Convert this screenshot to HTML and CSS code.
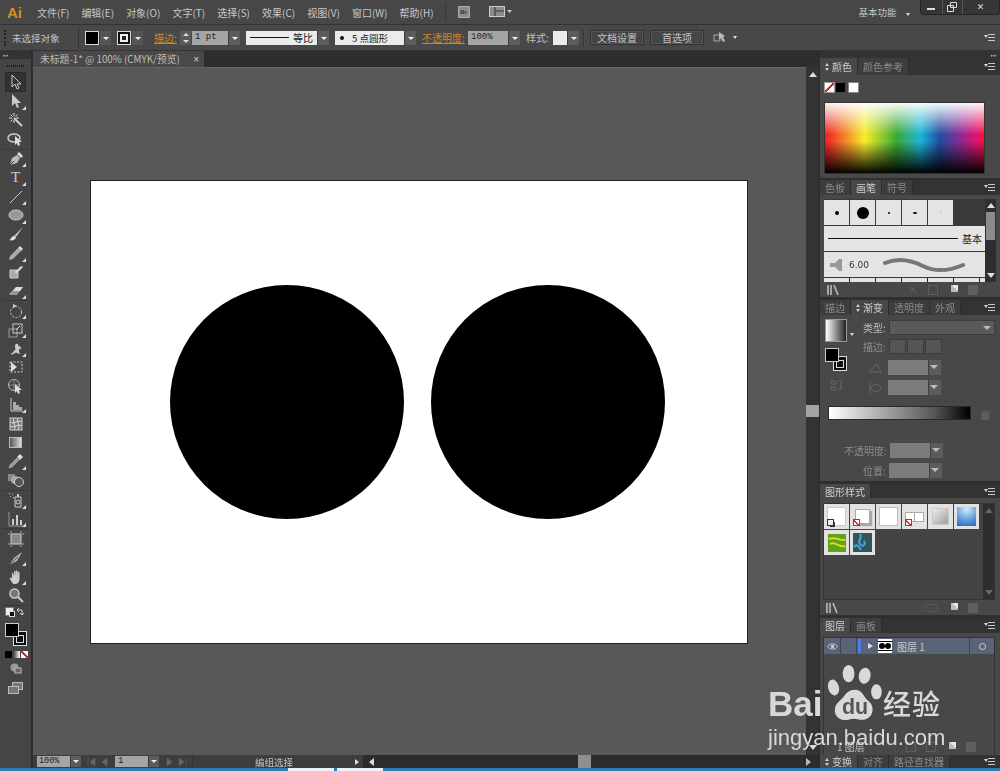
FILE: index.html
```html
<!DOCTYPE html>
<html lang="zh-CN">
<head>
<meta charset="utf-8">
<title>Adobe Illustrator</title>
<link rel="stylesheet" href="styles.css">
</head>
<body>
<div class="app">
  <header class="menubar">
    <span class="logo">Ai</span>
    <nav class="menus">
      <span>文件(F)</span><span>编辑(E)</span><span>对象(O)</span><span>文字(T)</span><span>选择(S)</span><span>效果(C)</span><span>视图(V)</span><span>窗口(W)</span><span>帮助(H)</span>
    </nav>
    <i class="vsep sep-menu"></i>
    <span class="br">Br</span>
    <svg class="arrange" width="24" height="12" viewBox="0 0 24 12"><rect x="0.5" y="0.5" width="15" height="10" fill="#8a8a8a" stroke="#ccc"/><path d="M6 1v9M6 5h9" stroke="#333"/><path d="M18 4h5l-2.500 3z" fill="#ccc"/></svg>
    <span class="workspace">基本功能</span>
    <i class="tiny-arrow"></i>
    <div class="winbtns">
      <span class="wb wb-min"><i></i></span>
      <span class="wb wb-max"><svg width="10" height="10" viewBox="0 0 10 10"><path d="M3.500 .5h6v5h-6zM.5 3.500h6v6h-6z" fill="#333" stroke="#ddd"/></svg></span>
      <span class="wb wb-close">✕</span>
    </div>
  </header>

  <section class="ctrlbar">
    <i class="grip"></i>
    <span class="noselect">未选择对象</span>
    <i class="vsep sep-a"></i>
    <span class="swatch sw-fill"></span><span class="drop d-dark"></span>
    <span class="swatch sw-stroke"><i></i></span><span class="drop d-dark"></span>
    <span class="orange l-stroke">描边:</span>
    <span class="spin"><i class="up"></i><i class="down"></i></span>
    <span class="field f-pt">1 pt</span><span class="drop"></span>
    <span class="lightbox lb-line"><i class="line"></i>等比</span><span class="drop"></span>
    <span class="lightbox lb-dot"><i class="bullet"></i>5 点圆形</span><span class="drop"></span>
    <span class="orange l-opac">不透明度:</span>
    <span class="field f-op">100%</span><span class="drop"></span>
    <span class="label l-style">样式:</span>
    <span class="lightbox lb-style"></span><span class="drop"></span>
    <i class="vsep sep-b"></i>
    <span class="btn b-doc">文档设置</span>
    <span class="btn b-pref">首选项</span>
    <svg class="align" width="14" height="13" viewBox="0 0 14 13"><path d="M1 4h6v6H1z" fill="none" stroke="#aaa"/><path d="M6 1l6 4-2 1 2 4-2 1-2-4-2 2z" fill="#bbb"/></svg>
    <i class="tiny-arrow ta-ctrl"></i>
    <span class="pmenu pm-ctrl"></span>
  </section>

  <div class="workarea">
    <aside class="toolbar">
      <div class="tb-head">▸▸</div>
      <div class="tb-grip"></div>
      <div class="tool selected"><svg width="16" height="16" viewBox="0 0 16 16"><path d="M4 1v12l3-3 2 5 2-1-2-4h4z" fill="#333" stroke="#ccc"/></svg></div>
      <div class="tool more"><svg width="16" height="16" viewBox="0 0 16 16"><path d="M4 1v12l3-3 2 5 2-1-2-4h4z" fill="#ccc"/></svg></div>
      <div class="tool"><svg width="16" height="16" viewBox="0 0 16 16"><path d="M6 6l8 8" stroke="#ccc" stroke-width="2"/><path d="M6 1v3M6 8v3M1 6h3M8 6h3M2.500 2.500l2 2M9.500 2.500l-2 2M2.500 9.500l2-2" stroke="#ddd"/></svg></div>
      <div class="tool"><svg width="18" height="16" viewBox="0 0 18 16"><ellipse cx="7" cy="7" rx="6" ry="4" fill="none" stroke="#ccc" stroke-width="1.500"/><path d="M8 5v9l2-2 1 3 2-1-1-3h3z" fill="#ddd"/></svg></div>
      <div class="tsep"></div>
      <div class="tool more"><svg width="16" height="16" viewBox="0 0 16 16"><path d="M2 14l2-7 5-3 3 3-3 5z" fill="#bbb"/><path d="M9 3l2-2 4 4-2 2z" fill="#ddd"/><path d="M2 14l4-4" stroke="#333"/></svg></div>
      <div class="tool more t-type">T</div>
      <div class="tool more"><svg width="16" height="16" viewBox="0 0 16 16"><path d="M2 14L14 2" stroke="#ccc"/></svg></div>
      <div class="tool more"><svg width="16" height="16" viewBox="0 0 16 16"><ellipse cx="8" cy="8" rx="7" ry="5" fill="#999" stroke="#ccc"/></svg></div>
      <div class="tool"><svg width="16" height="16" viewBox="0 0 16 16"><path d="M6 10L15 1l-7 10z" fill="#ccc"/><path d="M1 14c2 0 2-4 5-4l2 1c0 3-4 4-7 3z" fill="#ddd"/></svg></div>
      <div class="tool more"><svg width="16" height="16" viewBox="0 0 16 16"><path d="M1 15l1-4 8-8 3 3-8 8z" fill="#aaa"/><path d="M10 3l2-2 3 3-2 2z" fill="#ddd"/></svg></div>
      <div class="tool"><svg width="16" height="16" viewBox="0 0 16 16"><path d="M2 6h7l-2 3 3-1v6H2z" fill="#aaa" stroke="#ccc"/><path d="M7 8l6-6 2 1-6 6z" fill="#ddd"/></svg></div>
      <div class="tool more"><svg width="16" height="16" viewBox="0 0 16 16"><path d="M1 11l7-7h7l-6 8H2z" fill="#999"/><path d="M8 4h7l-3 4H5z" fill="#ddd"/></svg></div>
      <div class="tsep"></div>
      <div class="tool more"><svg width="16" height="16" viewBox="0 0 16 16"><circle cx="8" cy="9" r="5.500" fill="none" stroke="#ccc" stroke-dasharray="2 1.500"/><path d="M5 1l4 2-4 2z" fill="#ccc"/></svg></div>
      <div class="tool more"><svg width="16" height="16" viewBox="0 0 16 16"><rect x="1" y="7" width="8" height="8" fill="none" stroke="#999"/><rect x="5" y="2" width="9" height="9" fill="none" stroke="#ccc"/><path d="M8 8l4-4" stroke="#eee"/></svg></div>
      <div class="tool more"><svg width="16" height="16" viewBox="0 0 16 16"><path d="M2 14c4-1 3-3 5-4 2-2-2-3 1-6 2-1 3 1 2 2 2 0 3 1 4 3-2-1-3 0-3 2s1 2 2 3c-3 0-4-2-6-1-1 1-3 2-5 1z" fill="#ccc"/></svg></div>
      <div class="tool"><svg width="16" height="16" viewBox="0 0 16 16"><path d="M2 3h12v10H2z" fill="none" stroke="#ccc" stroke-dasharray="2 1.500"/><path d="M3 3l6 5-6 5z" fill="#ddd"/></svg></div>
      <div class="tool"><svg width="18" height="16" viewBox="0 0 18 16"><circle cx="7" cy="7" r="5.500" fill="none" stroke="#bbb"/><path d="M2 7h10M7 2v10" stroke="#888"/><path d="M8 6v9l2-2 1 3 2-1-1-3h3z" fill="#ddd"/></svg></div>
      <div class="tool more"><svg width="16" height="16" viewBox="0 0 16 16"><path d="M3 1v13h12" fill="none" stroke="#ccc"/><path d="M5 5h3v8H5zM8 8h3v5H8zM11 10h3v3h-3z" fill="#aaa"/></svg></div>
      <div class="tool"><svg width="16" height="16" viewBox="0 0 16 16"><rect x="2" y="2" width="12" height="12" fill="#777" stroke="#ccc"/><path d="M2 6c4 3 8-3 12 0M2 10c4 3 8-3 12 0M6 2c-2 4 3 8 0 12M10 2c-2 4 3 8 0 12" fill="none" stroke="#ddd"/></svg></div>
      <div class="tool"><i class="gradicon"></i></div>
      <div class="tool more"><svg width="16" height="16" viewBox="0 0 16 16"><path d="M1 15l1-3 7-7 2 2-7 7z" fill="#999" stroke="#ccc" stroke-width=".5"/><path d="M9 4l3-3 3 3-3 3z" fill="#ddd"/></svg></div>
      <div class="tool"><svg width="18" height="16" viewBox="0 0 18 16"><rect x="1" y="2" width="7" height="7" fill="#888"/><circle cx="8" cy="8" r="4" fill="#aaa"/><circle cx="12" cy="10" r="4.500" fill="#555" stroke="#ccc"/></svg></div>
      <div class="tsep"></div>
      <div class="tool more"><svg width="16" height="16" viewBox="0 0 16 16"><path d="M7 5h6v10H7z" fill="none" stroke="#ccc"/><path d="M9 2h2v3H9z" fill="#ccc"/><circle cx="10" cy="10" r="2" fill="none" stroke="#ccc"/><path d="M1 1h1v1H1zM4 2h1v1H4zM2 4h1v1H2zM5 5h1v1H5z" fill="#bbb"/></svg></div>
      <div class="tool more"><svg width="16" height="16" viewBox="0 0 16 16"><path d="M1 1v14h14" fill="none" stroke="#999"/><path d="M4 8h2v6H4zM8 4h2v10H8zM12 9h2v5h-2z" fill="#ccc"/></svg></div>
      <div class="tsep"></div>
      <div class="tool"><svg width="16" height="16" viewBox="0 0 16 16"><rect x="3" y="3" width="10" height="10" fill="#888" stroke="#ccc"/><path d="M3 0v2M13 0v2M3 14v2M13 14v2M0 3h2M0 13h2M14 3h2M14 13h2" stroke="#aaa"/></svg></div>
      <div class="tool more"><svg width="16" height="16" viewBox="0 0 16 16"><path d="M1 15l5-7 8-6-5 9z" fill="#bbb"/><path d="M1 15l9-8" stroke="#444"/></svg></div>
      <div class="tool more"><svg width="16" height="16" viewBox="0 0 16 16"><path d="M4 9V4l1 0 1 3V2h1.500l.5 5V1.500h1.500l.5 5.500V3h1.500v7c0 3-2 5-4.500 5S4.500 14 1.500 9.500L2.500 8.500z" fill="#ccc"/></svg></div>
      <div class="tool"><svg width="16" height="16" viewBox="0 0 16 16"><circle cx="6.500" cy="6.500" r="4.500" fill="#777" stroke="#ccc" stroke-width="1.500"/><path d="M10 10l5 5" stroke="#ccc" stroke-width="2"/></svg></div>
      <div class="tsep"></div>
      <div class="tb-swaprow">
        <span class="mini-default"><i></i></span>
        <svg width="10" height="10" viewBox="0 0 10 10"><path d="M2 3h5v5M2 3l2-2M2 3l2 2M7 8l2-2M7 8L5 6" fill="none" stroke="#ccc"/></svg>
      </div>
      <div class="fillstroke"><span class="fs-stroke"><i></i></span><span class="fs-fill"></span></div>
      <div class="modes"><i class="m-k"></i><i class="m-g"></i><i class="m-n"></i></div>
      <div class="drawmode"><svg width="12" height="11" viewBox="0 0 12 11"><circle cx="4.500" cy="4.500" r="4" fill="#999"/><rect x="5" y="5" width="6" height="5" fill="#666" stroke="#bbb"/></svg></div>
      <div class="screenmode"><svg width="15" height="12" viewBox="0 0 15 12"><rect x="4.500" y=".5" width="10" height="7" fill="#777" stroke="#bbb"/><rect x=".5" y="4.500" width="10" height="7" fill="#777" stroke="#bbb"/></svg></div>
    </aside>

    <main class="docarea">
      <div class="tabstrip"><div class="doctab"><span>未标题-1* @ 100% (CMYK/预览)</span><b>×</b></div></div>
      <div class="docmid">
        <div class="canvas">
          <div class="artboard"><div class="circle"></div><div class="circle"></div></div>
        </div>
        <div class="vscroll"><i class="a-up"></i><span class="vthumb"></span><i class="a-down"></i></div>
      </div>
      <footer class="status">
        <span class="field st-zoom">100%</span><span class="drop st-drop"></span>
        <span class="navs n1"><svg width="22" height="8" viewBox="0 0 22 8"><path d="M1 0v8M8 0L3 4l5 4zM20 0l-5 4 5 4z" fill="#666" stroke="#666" stroke-width=".6"/></svg></span>
        <span class="field st-page">1</span><span class="drop st-drop"></span>
        <span class="navs n2"><svg width="22" height="8" viewBox="0 0 22 8"><path d="M2 0l5 4-5 4zM14 0l5 4-5 4zM21 0v8" fill="#666" stroke="#666" stroke-width=".6"/></svg></span>
        <span class="st-label">编组选择</span>
        <i class="a-right ar-st"></i>
        <div class="hscroll"><i class="a-left"></i><span class="hthumb"></span><i class="a-right ar-end"></i></div>
      </footer>
    </main>

    <aside class="panels">
      <div class="p-top">▸▸</div>

      <div class="phead ph17"><span class="ptab on"><i class="updown"></i>颜色</span><span class="ptab">颜色参考</span><span class="pmenu"></span></div>
      <div class="pbody pb-color">
        <div class="colorchips"><i class="chip c-none"></i><i class="chip c-black"></i><i class="chip c-white"></i></div>
        <div class="spectrum"></div>
      </div>
      <div class="pgap g2"></div>

      <div class="phead"><span class="ptab">色板</span><span class="ptab on">画笔</span><span class="ptab">符号</span><span class="pmenu"></span></div>
      <div class="pbody pb-brush">
        <div class="brushbox">
          <div class="brushlist">
            <div class="brow1">
              <span class="bcell"><i class="dot d5"></i></span><span class="bcell"><i class="dot d12"></i></span><span class="bcell"><i class="dot d2"></i></span><span class="bcell"><i class="dot d3"></i></span><span class="bcell"><i class="dot d1"></i></span>
            </div>
            <div class="brow2"><i class="bline"></i><span>基本</span></div>
            <div class="brow3">
              <svg width="14" height="12" viewBox="0 0 14 12"><path d="M0 4h5l4-4h3v12H9L5 8H0z" fill="#999"/></svg>
              <span>6.00</span>
              <svg class="wave" width="82" height="16" viewBox="0 0 82 16"><path d="M2 6c14-6 26-3 38 3s26 5 40-1" fill="none" stroke="#777" stroke-width="4" stroke-linecap="round"/></svg>
            </div>
            <div class="brow4"></div>
          </div>
          <div class="sbar"><i class="a-up w"></i><span class="sthumb"></span><i class="a-down w"></i></div>
        </div>
        <div class="pfoot"><svg class="lib" width="14" height="10" viewBox="0 0 14 10"><path d="M1 0v10M4 0v10M7 0l4 10" stroke="#bbb" stroke-width="1.600"/></svg><span class="sp"></span><b class="fi dim">✕</b><b class="fi dim sq"></b><b class="fi newi"></b><b class="fi dim tr"></b></div>
      </div>
      <div class="pgap g3"></div>

      <div class="phead"><span class="ptab">描边</span><span class="ptab on"><i class="updown"></i>渐变</span><span class="ptab">透明度</span><span class="ptab">外观</span><span class="pmenu"></span></div>
      <div class="pbody pb-grad">
        <div class="gtop">
          <div class="gleft">
            <div class="gprev-row"><i class="gprev"></i><i class="tiny-arrow"></i></div>
            <div class="fillstroke fs-grad"><span class="fs-stroke"><i></i></span><span class="fs-fill"></span></div>
            <svg class="reverse" width="13" height="11" viewBox="0 0 13 11"><path d="M1 1h5v3H1zM1 7h5v3H1zM8 1h4M8 9h4M11 1v8" fill="none" stroke="#666"/></svg>
          </div>
          <div class="gright">
            <div class="grow r-type"><label>类型:</label><span class="gsel"><i class="drop-tri"></i></span></div>
            <div class="grow r-stroke"><label class="dim-l">描边:</label><span class="gbtns"><i></i><i></i><i></i></span></div>
            <div class="grow r-angle"><svg width="14" height="10" viewBox="0 0 14 10"><path d="M1 9h12L9 1z" fill="none" stroke="#666"/></svg><span class="ginput"><i class="drop-tri"></i></span></div>
            <div class="grow r-aspect"><svg width="14" height="14" viewBox="0 0 14 14"><ellipse cx="8" cy="7" rx="5" ry="3.500" fill="none" stroke="#666"/><path d="M2 1v12" stroke="#666"/></svg><span class="ginput"><i class="drop-tri"></i></span></div>
          </div>
        </div>
        <div class="gbar-row"><i class="gbar"></i><svg width="9" height="10" viewBox="0 0 9 10"><path d="M0 2h9M3 1h3M1 3h7v7H1z" fill="#5d5d5d" stroke="#5d5d5d"/></svg></div>
        <div class="grow r-op"><label class="dim-l">不透明度:</label><span class="ginput"><i class="drop-tri"></i></span></div>
        <div class="grow r-pos"><label class="dim-l">位置:</label><span class="ginput"><i class="drop-tri"></i></span></div>
      </div>
      <div class="pgap g3"></div>

      <div class="phead ph14"><span class="ptab on">图形样式</span><span class="pmenu"></span></div>
      <div class="pbody pb-style">
        <div class="stylebox">
          <div class="stylegrid">
            <span class="scell"><i class="s-white"></i><em class="corner c1"></em></span>
            <span class="scell"><i class="s-shadow"></i><em class="corner c2"></em></span>
            <span class="scell"><i class="s-plain"></i></span>
            <span class="scell"><i class="s-two"></i><em class="corner c2"></em></span>
            <span class="scell"><i class="s-grey"></i></span>
            <span class="scell"><i class="s-blue"></i></span>
            <span class="scell"><i class="s-green"><svg width="18" height="18" viewBox="0 0 18 18"><path d="M1 5c6-3 11 2 16 1M2 10c6-3 9 4 15 2" fill="none" stroke="#e6d814" stroke-width="2"/></svg></i></span>
            <span class="scell"><i class="s-teal"><svg width="18" height="18" viewBox="0 0 18 18"><path d="M7 1c3 4-3 6 0 10s6 0 4-3M1 14c3-4 5 0 7 3" fill="none" stroke="#3da9dc" stroke-width="2"/></svg></i></span>
          </div>
          <div class="sbar sbar-dim"><i class="a-up"></i><i class="a-down"></i></div>
        </div>
        <div class="pfoot"><svg class="lib" width="14" height="10" viewBox="0 0 14 10"><path d="M1 0v10M4 0v10M7 0l4 10" stroke="#bbb" stroke-width="1.600"/></svg><span class="sp"></span><b class="fi dim sq2"></b><b class="fi newi"></b><b class="fi dim tr"></b></div>
      </div>
      <div class="pgap g3"></div>

      <div class="phead"><span class="ptab on">图层</span><span class="ptab">画板</span><span class="pmenu"></span></div>
      <div class="pbody pb-layer">
        <div class="layerbox">
          <div class="layerrow">
            <span class="lc lc-eye"><svg width="11" height="7" viewBox="0 0 11 7"><path d="M.5 3.500C3 0 8 0 10.500 3.500 8 7 3 7 .5 3.500z" fill="none" stroke="#ccc"/><circle cx="5.500" cy="3.500" r="1.800" fill="#ccc"/></svg></span>
            <span class="lc lc-lock"></span>
            <span class="lc-blue"></span>
            <span class="lc-arrow"></span>
            <span class="lc-thumb"><i></i><i></i></span>
            <span class="lc-name">图层 1</span>
            <span class="lc lc-target"><i></i></span>
          </div>
          <div class="layerfoot"><span>1 图层</span><span class="sp"></span><b class="fi sq"></b><b class="fi sq"></b><b class="fi newi"></b><b class="fi tr"></b></div>
        </div>
      </div>
      <div class="phead pbottom"><span class="ptab on"><i class="updown"></i>变换</span><span class="ptab">对齐</span><span class="ptab">路径查找器</span><span class="pmenu"></span></div>
    </aside>
  </div>
  <div class="taskbar"><i></i><i></i></div>

  <div class="watermark">
    <div class="wm-top">
      <span class="wm-bai">Bai</span>
      <svg width="54" height="59" viewBox="0 0 50 55"><g fill="#d9d9d9"><ellipse cx="5" cy="21" rx="5" ry="7.500" transform="rotate(-15 5 21)"/><ellipse cx="19" cy="8" rx="5.500" ry="8"/><ellipse cx="34" cy="10" rx="5.500" ry="7.500" transform="rotate(10 34 10)"/><ellipse cx="45" cy="25" rx="5" ry="7"/><path d="M25 23c7 0 8 7 13 11 6 5 4 16-5 17-4 .5-6-1-9-1-4 0-6 2-11 1-8-2-9-12-3-17 5-4 7-11 15-11z"/></g><text x="25" y="46" class="wm-du">du</text></svg>
      <span class="wm-cn">经验</span>
    </div>
    <div class="wm-url">jingyan.baidu.com</div>
  </div>
</div>
</body>
</html>
```

FILE: styles.css
```css
* { box-sizing: border-box; }
html, body { margin: 0; padding: 0; height: 100%; }
body { background: #3c3c3c; overflow: hidden; }
i, em { display: block; font-style: normal; }

.app {
  position: relative;
  width: 1000px;
  height: 771px;
  display: flex;
  flex-direction: column;
  font: 10px "Noto Sans CJK SC", "Liberation Sans", sans-serif;
  color: #c4c4c4;
  filter: blur(.35px);
}

/* menu bar */
.menubar {
  height: 25px;
  flex: none;
  display: flex;
  align-items: center;
  background: #474747;
  border-bottom: 1px solid #333;
  padding-left: 7px;
}
.logo { font: bold 15px "Liberation Sans", sans-serif; color: #d88f25; width: 30px; }
.menus { display: flex; gap: 12.100px; color: #c8c8c8; }
.menus span { white-space: nowrap; }
.vsep { width: 1px; background: #373737; flex: none; }
.sep-menu { height: 16px; margin-left: 11px; }
.br {
  width: 12px; height: 12px; margin-left: 12px;
  background: #8b8b8b; border: 1px solid #aaa;
  font: bold 6px "Liberation Sans", sans-serif;
  color: #333; text-align: center; line-height: 10px;
}
.arrange { margin-left: 19px; }
.workspace { margin-left: 346px; font-size: 9.500px; white-space: nowrap; }
.tiny-arrow { width: 0; height: 0; border: 2.500px solid transparent; border-top: 3px solid #ddd; border-bottom: 0; margin-left: 9px; margin-top: 4px; }
.winbtns {
  display: flex; height: 15px; margin-left: 10px; align-self: flex-start;
  background: #363636; border: 1px solid #252525; border-top: 0; border-radius: 0 0 4px 4px;
}
.wb { display: flex; align-items: center; justify-content: center; border-right: 1px solid #555; color: #ddd; }
.wb-min { width: 22px; }
.wb-min i { width: 8px; height: 2px; background: #ddd; margin-top: 3px; }
.wb-max { width: 20px; }
.wb-close { width: 36px; border-right: 0; font: bold 9px "DejaVu Sans", sans-serif; }

/* control bar */
.ctrlbar {
  height: 26px;
  flex: none;
  display: flex;
  align-items: center;
  background: #484848;
  border-bottom: 1px solid #333;
  padding-left: 4px;
}
.grip { width: 2px; height: 16px; border-left: 2px dotted #222; }
.noselect { margin-left: 6px; width: 66px; white-space: nowrap; font-size: 9.500px; }
.sep-a { height: 22px; }
.sep-b { height: 18px; margin-left: 4px; }
.swatch { width: 14px; height: 14px; background: #000; border: 1px solid #ddd; flex: none; }
.sw-fill { margin-left: 6px; }
.sw-stroke { margin-left: 6px; background: #111; display: flex; align-items: center; justify-content: center; }
.sw-stroke i { width: 8px; height: 8px; background: #222; border: 2px solid #eee; }
.drop {
  width: 12px; height: 14px; flex: none; background: #5c5c5c; position: relative;
  border-left: 1px solid #3a3a3a;
}
.drop::after {
  content: ""; position: absolute; left: 3px; top: 6px;
  border: 3px solid transparent; border-top: 3px solid #eee; border-bottom: 0;
}
.d-dark { background: #555; }
.orange { color: #d0862a; text-decoration: underline; white-space: nowrap; }
.l-stroke { margin-left: 11px; width: 26px; }
.spin { width: 11px; height: 14px; display: flex; flex-direction: column; justify-content: space-around; align-items: center; background: #5a5a5a; flex: none; }
.spin i { width: 0; height: 0; border: 3px solid transparent; }
.spin .up { border-bottom: 3px solid #ddd; border-top: 0; }
.spin .down { border-top: 3px solid #ddd; border-bottom: 0; }
.field {
  height: 14px; background: #a5a5a5; color: #222; flex: none;
  font: 9px "Liberation Mono", monospace; line-height: 13px; padding-left: 3px; white-space: nowrap;
}
.f-pt { width: 36px; margin-left: 1px; }
.lightbox {
  height: 14px; background: #ebebeb; color: #222; flex: none; display: flex; align-items: center;
  white-space: nowrap; font-size: 10px;
}
.lb-line { width: 71px; margin-left: 6px; padding-left: 4px; gap: 4px; }
.line { width: 39px; height: 1.500px; background: #111; }
.lb-dot { width: 69px; margin-left: 6px; padding-left: 5px; gap: 8px; font-size: 9.500px; }
.bullet { width: 4px; height: 4px; border-radius: 50%; background: #111; }
.l-opac { margin-left: 6px; width: 46px; }
.f-op { width: 40px; }
.label { white-space: nowrap; }
.l-style { margin-left: 6px; width: 27px; }
.lb-style { width: 14px; }
.btn {
  height: 15px; background: #454545; border: 1px solid #333; box-shadow: inset 0 0 0 1px #555;
  display: flex; align-items: center; justify-content: center; flex: none; width: 54px; white-space: nowrap;
}
.b-doc { margin-left: 6px; }
.b-pref { margin-left: 6px; }
.align { margin-left: 9px; }
.ta-ctrl { margin-left: 6px; margin-top: 0; }
.pm-ctrl { margin-left: 241px; }

.pmenu { width: 11px; height: 7px; flex: none; margin-left: auto; margin-right: 5px; position: relative;
  background: repeating-linear-gradient(#c8c8c8 0 1px, transparent 1px 3px) 4px 0 / 7px 7px no-repeat; }
.pmenu::before { content: ""; position: absolute; left: 0; top: 1px; border: 2px solid transparent; border-top: 3px solid #ddd; border-bottom: 0; }

/* work area */
.workarea { flex: 1; min-height: 0; display: flex; background: #2f2f2f; }

.toolbar { width: 32px; flex: none; display: flex; flex-direction: column; background: #454545; border-right: 1px solid #2a2a2a; }
.tb-head { height: 8px; flex: none; background: #333; font-size: 5px; line-height: 8px; padding-left: 3px; color: #aaa; }
.tb-grip { height: 13px; flex: none; margin: 0 7px; background: repeating-linear-gradient(90deg, #1c1c1c 0 1px, transparent 1px 2px) 0 6px / 100% 2px no-repeat; }
.tool { height: 18.850px; flex: none; display: flex; align-items: center; justify-content: center; position: relative; }
.tool.selected { background: #333; height: 20px; margin: 0 5px 0 5px; border: 1px solid #2a2a2a; }
.tool.more::after { content: ""; position: absolute; right: 5px; bottom: 1px; border: 2px solid transparent; border-right-color: #ddd; border-bottom-color: #ddd; }
.t-type { font: 15px "Liberation Serif", serif; color: #ccc; }
.tsep { height: 1px; flex: none; background: #383838; margin: 0 3px; }
.gradicon { width: 13px; height: 11px; background: linear-gradient(90deg, #555, #ddd); border: 1px solid #bbb; }
.tb-swaprow { display: flex; justify-content: space-between; align-items: center; padding: 0 6px 0 5px; height: 12px; flex: none; }
.mini-default { width: 9px; height: 9px; background: #eee; border: 1px solid #777; position: relative; }
.mini-default i { position: absolute; right: -2px; bottom: -2px; width: 6px; height: 6px; background: #111; border: 1px solid #ddd; }
.fillstroke { position: relative; width: 22px; height: 23px; margin: 5px 0 0 5px; flex: none; }
.fs-fill { position: absolute; left: 0; top: 0; width: 14px; height: 14px; background: #000; border: 1px solid #ccc; }
.fs-stroke { position: absolute; right: 0; bottom: 0; width: 14px; height: 15px; background: #111; border: 1px solid #ddd; display: flex; align-items: flex-end; justify-content: flex-end; padding: 2px; }
.fs-stroke i { width: 8px; height: 8px; border: 1px solid #ddd; }
.modes { display: flex; gap: 1px; margin: 5px 0 0 5px; flex: none; }
.modes i { width: 7px; height: 7px; }
.m-k { background: #000; }
.m-g { background: linear-gradient(90deg, #333, #fff); }
.m-n { background: linear-gradient(to top right, #fff 42%, #e22 42% 58%, #fff 58%); }
.drawmode { display: flex; justify-content: center; margin-top: 5px; flex: none; }
.screenmode { display: flex; justify-content: center; margin-top: 8px; flex: none; }

.docarea { width: 786px; flex: none; display: flex; flex-direction: column; margin-left: 1px; }
.tabstrip { height: 16px; flex: none; background: #2e2e2e; }
.doctab { width: 171px; height: 16px; background: #494949; display: flex; align-items: center; padding: 0 5px 0 7px; justify-content: space-between; white-space: nowrap; color: #bdbdbd; }
.doctab span { font-size: 9.800px; }
.doctab b { font: 10px "Liberation Sans", sans-serif; color: #ccc; }
.docmid { flex: 1; min-height: 0; display: flex; }
.canvas { flex: 1; background: #585858; padding: 112px 0 0 57px; border-top: 1px solid #666; }
.artboard {
  width: 658px; height: 464px; background: #fff; border: 1px solid #222;
  display: flex; gap: 27px; padding: 104px 0 0 79px;
}
.circle { width: 234px; height: 234px; border-radius: 50%; background: #000; }
.vscroll { width: 13px; flex: none; background: #333; display: flex; flex-direction: column; align-items: center; padding: 5px 0 5px; justify-content: space-between; position: relative; }
.vthumb { position: absolute; top: 338px; left: 0; width: 13px; height: 12px; background: #a3a3a3; }
.a-up { width: 0; height: 0; border: 4px solid transparent; border-bottom: 5px solid #ddd; border-top: 0; }
.a-down { width: 0; height: 0; border: 4px solid transparent; border-top: 5px solid #ddd; border-bottom: 0; }
.a-right { width: 0; height: 0; border: 4px solid transparent; border-left: 5px solid #ddd; border-right: 0; flex: none; }
.a-left { width: 0; height: 0; border: 4px solid transparent; border-right: 5px solid #ddd; border-left: 0; flex: none; }

.status { height: 13px; flex: none; display: flex; align-items: center; background: #3d3d3d; padding-left: 4px; }
.st-zoom { width: 33px; height: 11px; line-height: 10px; padding-left: 2px; font-size: 8.500px; }
.st-drop { height: 11px; width: 11px; }
.st-drop::after { top: 4px; left: 2px; }
.navs { display: flex; }
.n1 { margin-left: 6px; width: 28px; }
.st-page { width: 33px; height: 11px; line-height: 10px; padding-left: 3px; }
.n2 { margin-left: 6px; width: 27px; }
.st-label { width: 163px; text-align: center; white-space: nowrap; border-left: 1px solid #333; font-size: 9.500px; }
.ar-st { border-width: 3px; border-left-width: 4px; }
.hscroll { flex: 1; height: 13px; background: #2c2c2c; margin-left: 4px; display: flex; align-items: center; padding: 0 8px 0 6px; position: relative; justify-content: space-between; }
.hthumb { position: absolute; left: 215px; top: 0; width: 13px; height: 13px; background: #8f8f8f; }
.ar-end { opacity: .8; }

/* panels */
.panels { width: 181px; flex: none; display: flex; flex-direction: column; margin-left: 0; border-left: 1px solid #2a2a2a; }
.p-top { height: 7px; flex: none; background: #333; font-size: 5px; line-height: 7px; text-align: right; padding-right: 3px; color: #aaa; }
.phead { height: 15px; flex: none; display: flex; align-items: stretch; background: #333; }
.ph17 { height: 17px; }
.ph14 { height: 14px; }
.ptab { display: flex; align-items: center; padding: 0 5px; white-space: nowrap; color: #8a8a8a; background: #3d3d3d; border-right: 1px solid #2d2d2d; }
.ptab.on { background: #484848; color: #cfcfcf; }
.phead .pmenu { align-self: center; }
.updown { width: 5px; height: 8px; margin-right: 2px; position: relative; }
.updown::before, .updown::after { content: ""; position: absolute; left: 0; border: 2.500px solid transparent; }
.updown::before { top: 0; border-bottom: 3px solid #ccc; border-top: 0; }
.updown::after { bottom: 0; border-top: 3px solid #ccc; border-bottom: 0; }
.pbody { flex: none; background: #484848; }
.pgap { flex: none; background: #2f2f2f; }
.g2 { height: 2px; }
.g3 { height: 3px; }

.pb-color { height: 103px; padding: 7px 4px 0 4px; }
.colorchips { display: flex; height: 11px; }
.chip { width: 11px; height: 11px; border: 1px solid #999; margin-right: -1px; }
.c-none { background: linear-gradient(to bottom right, #fff 42%, #e22 42% 58%, #fff 58%); width: 11px; margin-right: 0; }
.c-black { background: #000; margin: 0 2px 0 0; border-color: #444; }
.c-white { background: #fff; border-color: #888; }
.spectrum {
  width: 161px; height: 72px; margin-top: 9px; border: 1px solid #333;
  background:
    linear-gradient(rgba(255,255,255,.95), rgba(255,255,255,0) 45%, rgba(0,0,0,0) 55%, rgba(0,0,0,.98)),
    linear-gradient(90deg, #ee1c25 0%, #f7ee2b 25%, #3aa935 45%, #1db6d6 60%, #214ea2 72%, #8a2a92 85%, #ea1066 97%, #ee1c25 100%);
}

.pb-brush { height: 102px; padding: 4px 0 0 4px; display: flex; flex-direction: column; }
.brushbox { display: flex; height: 83px; background: #3a3a3a; width: 172px; }
.brushlist { width: 161px; padding: 1px 0 0 0; display: flex; flex-direction: column; gap: 1px; overflow: hidden; }
.brow1 { display: flex; gap: 1px; height: 25px; }
.bcell { width: 25px; height: 25px; background: #e4e4e4; display: flex; align-items: center; justify-content: center; }
.dot { border-radius: 50%; background: #000; }
.d5 { width: 4px; height: 4px; }
.d12 { width: 12px; height: 12px; }
.d2 { width: 2px; height: 2px; }
.d3 { width: 4px; height: 2px; }
.d1 { width: 1px; height: 3px; background: #bbb; }
.brow2 { height: 25px; background: #e4e4e4; display: flex; align-items: center; padding: 0 3px 0 4px; gap: 4px; color: #222; white-space: nowrap; }
.bline { flex: 1; height: 1.500px; background: #111; }
.brow3 { height: 25px; background: #e4e4e4; display: flex; align-items: center; padding-left: 6px; color: #333; gap: 5px; font: 9px "DejaVu Sans", sans-serif; }
.wave { margin-left: 9px; }
.brow4 { height: 4px; background: repeating-linear-gradient(90deg, #e4e4e4 0 25px, #222 25px 26px); }
.sbar { width: 11px; flex: none; display: flex; flex-direction: column; align-items: center; justify-content: space-between; padding: 4px 0; background: #2e2e2e; position: relative; }
.sthumb { position: absolute; left: 1px; top: 13px; width: 9px; height: 28px; background: #8b8b8b; }
.sbar-dim .a-up { border-bottom-color: #666; }
.sbar-dim .a-down { border-top-color: #666; }
.pfoot { height: 15px; display: flex; align-items: center; padding: 0 22px 0 3px; gap: 10px; }
.pb-style .pfoot { padding-right: 17px; }
.lib { flex: none; }
.sp { flex: 1; }
.fi { width: 10px; height: 10px; flex: none; display: flex; align-items: center; justify-content: center; color: #5f5f5f; font: 10px "DejaVu Sans", sans-serif; }
.sq { border: 1px solid #5f5f5f; }
.sq2 { border: 1px dashed #5f5f5f; border-radius: 3px; width: 14px; height: 8px; }
.newi { background: linear-gradient(to bottom left, #e8e8e8 0 30%, #bbb 30%); box-shadow: inset 3px -3px 0 #484848; }
.tr { background: #5f5f5f; }

.pb-grad { height: 166px; padding: 4px 6px 0 5px; }
.gtop { display: flex; height: 80px; }
.gleft { width: 38px; flex: none; display: flex; flex-direction: column; }
.gprev-row { display: flex; }
.gprev { width: 22px; height: 23px; background: linear-gradient(90deg, #fff, #222); border: 1px solid #999; }
.gprev-row .tiny-arrow { margin: 14px 0 0 3px; }
.fs-grad { margin: 6px 0 0 0; }
.reverse { margin: 9px 0 0 5px; }
.gright { flex: 1; display: flex; flex-direction: column; }
.grow { display: flex; align-items: center; justify-content: flex-end; gap: 3px; white-space: nowrap; }
.grow label { color: #bbb; }
.grow .dim-l { color: #8e8e8e; }
.r-type { height: 16px; }
.r-stroke { height: 15px; margin-top: 4px; justify-content: flex-start; padding-left: 0; }
.r-angle { height: 15px; margin-top: 6px; justify-content: flex-start; padding-left: 5px; gap: 6px; }
.r-aspect { height: 15px; margin-top: 5px; justify-content: flex-start; padding-left: 5px; gap: 6px; }
.gsel { width: 106px; height: 15px; background: #5a5a5a; border: 1px solid #3d3d3d; position: relative; }
.drop-tri { position: absolute; right: 3px; top: 5px; border: 4px solid transparent; border-top: 4px solid #bbb; border-bottom: 0; }
.gbtns { display: flex; gap: 1px; }
.gbtns i { width: 17px; height: 15px; background: #555; border: 1px solid #3d3d3d; }
.ginput { width: 53px; height: 15px; background: linear-gradient(90deg, #7c7c7c 0 40px, #3d3d3d 40px 41px, #5c5c5c 41px); position: relative; }
.gbar-row { display: flex; align-items: flex-end; margin: 7px 0 0 3px; gap: 10px; }
.gbar { width: 143px; height: 14px; background: linear-gradient(90deg, #fff, #999 45%, #555 75%, #000); border: 1px solid #2a2a2a; }
.r-op { margin-top: 23px; height: 15px; justify-content: flex-start; padding-left: 19px; }
.r-pos { margin-top: 5px; height: 15px; justify-content: flex-start; padding-left: 38px; }

.pb-style { height: 117px; padding: 5px 5px 0 3px; }
.stylebox { display: flex; height: 97px; background: #444; border: 1px solid #333; width: 172px; }
.stylegrid { width: 160px; display: flex; flex-wrap: wrap; align-content: flex-start; gap: 1px; padding: 0; }
.scell { width: 25px; height: 25px; background: #e2e2e2; position: relative; display: flex; align-items: center; justify-content: center; }
.scell > i { display: block; }
.s-white { width: 19px; height: 19px; background: #fff; border: 1px solid #ccc; }
.s-shadow { width: 15px; height: 15px; background: #fff; border: 1px solid #aaa; box-shadow: 2px 2px 1px #aaa; }
.s-plain { width: 19px; height: 19px; background: #fff; border: 1px solid #bbb; }
.s-two { width: 19px; height: 10px; background: linear-gradient(90deg, #fff 48%, #aaa 48% 52%, #fff 52%); border: 1px solid #aaa; }
.s-grey { width: 17px; height: 17px; background: linear-gradient(135deg, #ececec, #9f9f9f); border: 1px solid #ccc; }
.s-blue { width: 19px; height: 19px; background: radial-gradient(circle at 50% 10%, #d6ecfb, #5a9bdc 60%, #2f62b4); }
.s-green { width: 18px; height: 18px; background: #5da31f; }
.s-teal { width: 19px; height: 19px; background: #35545a; }
.s-green svg, .s-teal svg { display: block; }
.corner { position: absolute; left: 3px; bottom: 3px; width: 7px; height: 7px; }
.c1 { background: #eee; border: 1px solid #333; box-shadow: 2px 2px 0 -1px #333; }
.c2 { background: linear-gradient(to top right, #fff 40%, #d22 40% 60%, #fff 60%); border: 1px solid #555; }

.pb-layer { height: 122px; padding: 4px 5px 0 3px; }
.layerbox { height: 118px; border: 1px solid #333; border-bottom: 0; background: #484848; display: flex; flex-direction: column; width: 172px; }
.layerrow { height: 16px; background: #5a6478; display: flex; align-items: center; position: relative; flex: none; }
.lc { height: 16px; display: flex; align-items: center; justify-content: center; border-right: 1px solid #3f4553; flex: none; }
.lc-eye { width: 17px; }
.lc-lock { width: 16px; }
.lc-blue { width: 3px; height: 14px; background: #4f78e8; margin-left: 1px; flex: none; }
.lc-arrow { width: 0; height: 0; margin-left: 7px; border: 3.500px solid transparent; border-left: 5px solid #ddd; border-right: 0; flex: none; }
.lc-thumb { width: 14px; height: 14px; margin-left: 5px; background: linear-gradient(#fff 0 2px, #000 2px 3px, #fff 3px 11px, #000 11px 12px, #fff 12px); display: flex; align-items: center; justify-content: center; flex: none; }
.lc-thumb i { width: 6px; height: 6px; background: #000; border-radius: 50%; }
.lc-name { margin-left: 5px; width: 74px; color: #c8c8c8; white-space: nowrap; }
.lc-target { width: 25px; border-left: 1px solid #3f4553; border-right: 0; }
.lc-target i { width: 7px; height: 7px; border: 1px solid #ccc; border-radius: 50%; }
.layerfoot { margin-top: auto; height: 15px; display: flex; align-items: center; gap: 10px; padding: 0 18px 2px 13px; color: #bbb; white-space: nowrap; }
.pbottom { height: 13px; }

.taskbar { height: 3px; flex: none; background: #2b7cb0; display: flex; gap: 3px; padding-left: 288px; }
.taskbar i { width: 46px; height: 3px; background: #eef3f7; }

/* watermark overlay */
.watermark { position: absolute; left: 768px; top: 665px; width: 180px; color: #d9d9d9; pointer-events: none; }
.wm-top { display: flex; align-items: center; height: 59px; }
.wm-bai { font: bold 35px "Liberation Sans", sans-serif; width: 60px; margin-top: 19px; }
.wm-du { font: bold 20px "Liberation Sans", sans-serif; fill: #555; text-anchor: middle; }
.wm-cn { font-size: 28px; line-height: 1; margin: 16px 0 0 1px; white-space: nowrap; letter-spacing: 1px; font-weight: 500; }
.wm-url { font: 22px "Liberation Sans", sans-serif; margin-top: 1px; white-space: nowrap; }
```
